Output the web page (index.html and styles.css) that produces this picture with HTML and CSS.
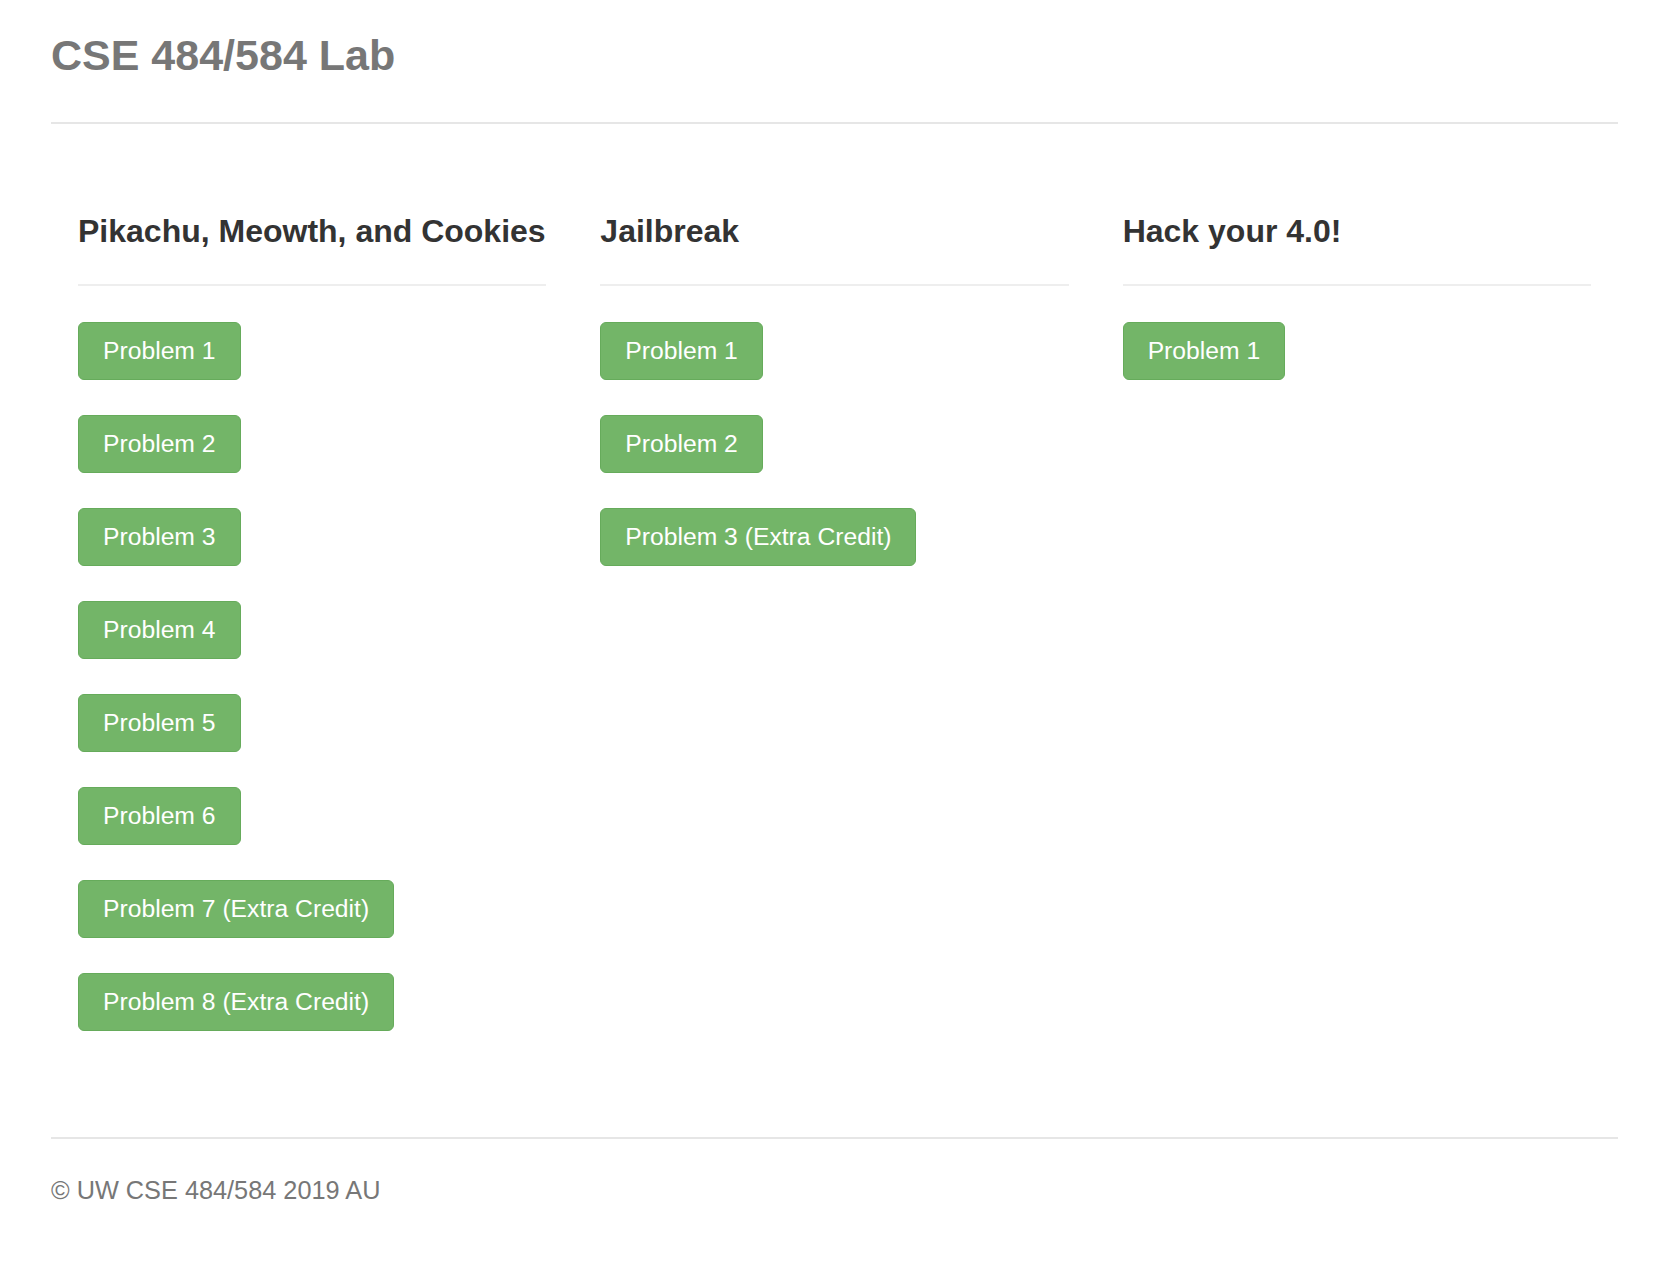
FILE: index.html
```html
<!DOCTYPE html>
<html lang="en">
<head>
<meta charset="utf-8">
<title>CSE 484/584 Lab</title>
<link rel="stylesheet" href="styles.css">
</head>
<body>
<div class="page">
  <header class="header">
    <h1 class="title">CSE 484/584 Lab</h1>
  </header>
  <main class="labs">
    <section class="lab">
      <h3 class="lab-title">Pikachu, Meowth, and Cookies</h3>
      <div class="problems">
        <a class="btn" href="#">Problem 1</a>
        <a class="btn" href="#">Problem 2</a>
        <a class="btn" href="#">Problem 3</a>
        <a class="btn" href="#">Problem 4</a>
        <a class="btn" href="#">Problem 5</a>
        <a class="btn" href="#">Problem 6</a>
        <a class="btn" href="#">Problem 7 (Extra Credit)</a>
        <a class="btn" href="#">Problem 8 (Extra Credit)</a>
      </div>
    </section>
    <section class="lab">
      <h3 class="lab-title">Jailbreak</h3>
      <div class="problems">
        <a class="btn" href="#">Problem 1</a>
        <a class="btn" href="#">Problem 2</a>
        <a class="btn" href="#">Problem 3 (Extra Credit)</a>
      </div>
    </section>
    <section class="lab">
      <h3 class="lab-title">Hack your 4.0!</h3>
      <div class="problems">
        <a class="btn" href="#">Problem 1</a>
      </div>
    </section>
  </main>
  <footer class="footer">
    <p class="copyright">© UW CSE 484/584 2019 AU</p>
  </footer>
</div>
</body>
</html>
```

FILE: styles.css
```css
* {
  box-sizing: border-box;
}

html, body {
  margin: 0;
  padding: 0;
  background: #ffffff;
}

body {
  font-family: "Liberation Sans", Arial, Helvetica, sans-serif;
  color: #333333;
}

.page {
  padding: 0 36px 0 51px;
}

.header {
  border-bottom: 2px solid #e6e6e6;
  padding-bottom: 44px;
}

.title {
  margin: 0;
  padding-top: 32px;
  font-size: 43px;
  line-height: 46px;
  font-weight: bold;
  color: #777777;
}

.labs {
  display: grid;
  grid-template-columns: repeat(3, 1fr);
  padding-top: 90px;
  padding-bottom: 106px;
}

.lab {
  padding: 0 27px;
}

.lab-title {
  margin: 0;
  font-size: 32px;
  line-height: 35px;
  font-weight: bold;
  color: #333333;
  padding-bottom: 35px;
  border-bottom: 2px solid #eeeeee;
}

.problems {
  display: flex;
  flex-direction: column;
  align-items: flex-start;
  gap: 35px;
  padding-top: 36px;
}

.btn {
  display: inline-block;
  padding: 11px 24px;
  font-size: 24.7px;
  line-height: 34px;
  color: #ffffff;
  text-decoration: none;
  background: #73b568;
  border: 1px solid #66ab5b;
  border-radius: 6px;
  white-space: nowrap;
}

.footer {
  border-top: 2px solid #e6e6e6;
  padding-top: 33px;
}

.copyright {
  margin: 0;
  font-size: 25.3px;
  line-height: 36px;
  color: #777777;
}
```
